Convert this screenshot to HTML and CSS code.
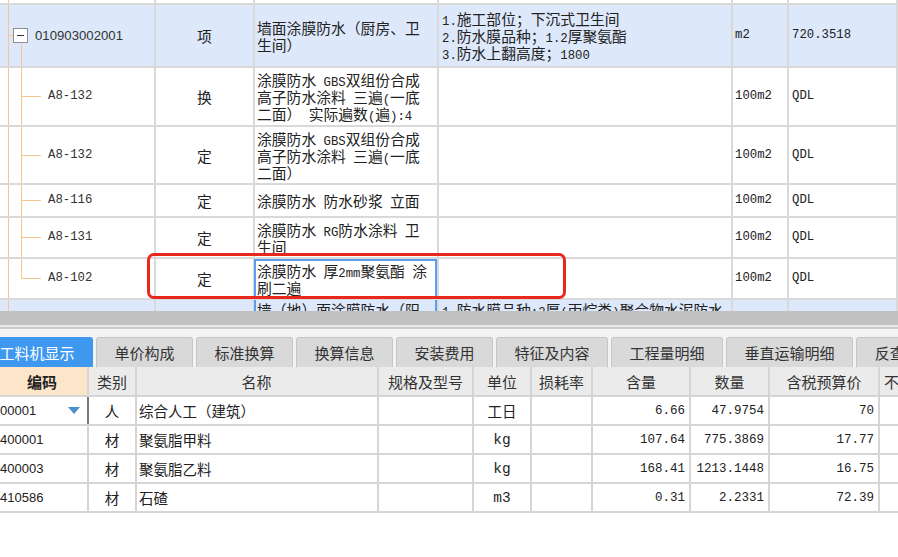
FILE: index.html
```html
<!DOCTYPE html>
<html lang="zh-CN">
<head>
<meta charset="utf-8">
<title>清单定额</title>
<link rel="stylesheet" href="styles.css">
</head>
<body>
<div class="app">
  <div class="upper">
    <div class="tr h0">
      <div class="td c1 t-blank"></div><div class="td c2"></div><div class="td c3"></div><div class="td c4"></div><div class="td c5"></div><div class="td c6"></div>
    </div>
    <div class="tr h1 hl">
      <div class="td c1 t-root"><span class="minus"></span><span class="code-root">010903002001</span></div>
      <div class="td c2 ctr">项</div>
      <div class="td c3"><div>墙面涂膜防水（厨房、卫<br>生间）</div></div>
      <div class="td c4"><div><span class="lt">1.</span>施工部位；下沉式卫生间<br><span class="lt">2.</span>防水膜品种；<span class="lt">1.2</span>厚聚氨酯<br><span class="lt">3.</span>防水上翻高度；<span class="lt">1800</span></div></div>
      <div class="td c5 mono">m2</div>
      <div class="td c6 mono">720.3518</div>
    </div>
    <div class="tr h2">
      <div class="td c1 t-child"><span class="code">A8-132</span></div>
      <div class="td c2 ctr">换</div>
      <div class="td c3"><div>涂膜防水<span class="lt"> GBS</span>双组份合成<br>高子防水涂料 三遍<span class="lt">(</span>一底<br>二面） 实际遍数<span class="lt">(</span>遍<span class="lt">):4</span></div></div>
      <div class="td c4"></div>
      <div class="td c5 mono">100m2</div>
      <div class="td c6 mono">QDL</div>
    </div>
    <div class="tr h3">
      <div class="td c1 t-child"><span class="code">A8-132</span></div>
      <div class="td c2 ctr">定</div>
      <div class="td c3"><div>涂膜防水<span class="lt"> GBS</span>双组份合成<br>高子防水涂料 三遍<span class="lt">(</span>一底<br>二面）</div></div>
      <div class="td c4"></div>
      <div class="td c5 mono">100m2</div>
      <div class="td c6 mono">QDL</div>
    </div>
    <div class="tr h4">
      <div class="td c1 t-child"><span class="code">A8-116</span></div>
      <div class="td c2 ctr">定</div>
      <div class="td c3"><div>涂膜防水 防水砂浆 立面</div></div>
      <div class="td c4"></div>
      <div class="td c5 mono">100m2</div>
      <div class="td c6 mono">QDL</div>
    </div>
    <div class="tr h5">
      <div class="td c1 t-child"><span class="code">A8-131</span></div>
      <div class="td c2 ctr">定</div>
      <div class="td c3"><div>涂膜防水<span class="lt"> RG</span>防水涂料 卫<br>生间</div></div>
      <div class="td c4"></div>
      <div class="td c5 mono">100m2</div>
      <div class="td c6 mono">QDL</div>
    </div>
    <div class="tr h5">
      <div class="td c1 t-last"><span class="code">A8-102</span></div>
      <div class="td c2 ctr">定</div>
      <div class="td c3 sel"><div>涂膜防水 厚<span class="lt">2mm</span>聚氨酯 涂<br>刷二遍</div></div>
      <div class="td c4"></div>
      <div class="td c5 mono">100m2</div>
      <div class="td c6 mono">QDL</div>
    </div>
    <div class="tr h5 hl top">
      <div class="td c1 t-blank"></div>
      <div class="td c2"></div>
      <div class="td c3 selcol"><div>墙（地）面涂膜防水（阳</div></div>
      <div class="td c4"><div><span class="lt">1.</span>防水膜品种<span class="lt">:2</span>厚<span class="lt">(</span>丙烷类<span class="lt">)</span>聚合物水泥防水</div></div>
      <div class="td c5"></div>
      <div class="td c6"></div>
    </div>
  </div>

  <div class="splitter"></div>

  <div class="tabbar">
    <div class="tabs">
      <div class="tab on">工料机显示</div>
      <div class="tab">单价构成</div>
      <div class="tab">标准换算</div>
      <div class="tab">换算信息</div>
      <div class="tab">安装费用</div>
      <div class="tab">特征及内容</div>
      <div class="tab">工程量明细</div>
      <div class="tab">垂直运输明细</div>
      <div class="tab">反查图形工程量</div>
    </div>
  </div>

  <div class="bgrid">
    <div class="br bh">
      <div class="bc b1 ctr peach">编码</div>
      <div class="bc b2 ctr">类别</div>
      <div class="bc b3 ctr">名称</div>
      <div class="bc b4 ctr">规格及型号</div>
      <div class="bc b5 ctr">单位</div>
      <div class="bc b6 ctr">损耗率</div>
      <div class="bc b7 ctr">含量</div>
      <div class="bc b8 ctr">数量</div>
      <div class="bc b9 ctr">含税预算价</div>
      <div class="bc b10">不含税预算价</div>
    </div>
    <div class="br">
      <div class="bc b1 dd"><span class="bcode">00001</span><span class="tri"></span></div>
      <div class="bc b2 ctr">人</div>
      <div class="bc b3">综合人工（建筑）</div>
      <div class="bc b4"></div>
      <div class="bc b5 ctr">工日</div>
      <div class="bc b6"></div>
      <div class="bc b7 num">6.66</div>
      <div class="bc b8 num">47.9754</div>
      <div class="bc b9 num">70</div>
      <div class="bc b10"></div>
    </div>
    <div class="br">
      <div class="bc b1"><span class="bcode">400001</span></div>
      <div class="bc b2 ctr">材</div>
      <div class="bc b3">聚氨脂甲料</div>
      <div class="bc b4"></div>
      <div class="bc b5 ctr mono">kg</div>
      <div class="bc b6"></div>
      <div class="bc b7 num">107.64</div>
      <div class="bc b8 num">775.3869</div>
      <div class="bc b9 num">17.77</div>
      <div class="bc b10"></div>
    </div>
    <div class="br">
      <div class="bc b1"><span class="bcode">400003</span></div>
      <div class="bc b2 ctr">材</div>
      <div class="bc b3">聚氨脂乙料</div>
      <div class="bc b4"></div>
      <div class="bc b5 ctr mono">kg</div>
      <div class="bc b6"></div>
      <div class="bc b7 num">168.41</div>
      <div class="bc b8 num">1213.1448</div>
      <div class="bc b9 num">16.75</div>
      <div class="bc b10"></div>
    </div>
    <div class="br">
      <div class="bc b1"><span class="bcode">410586</span></div>
      <div class="bc b2 ctr">材</div>
      <div class="bc b3">石碴</div>
      <div class="bc b4"></div>
      <div class="bc b5 ctr mono">m3</div>
      <div class="bc b6"></div>
      <div class="bc b7 num">0.31</div>
      <div class="bc b8 num">2.2331</div>
      <div class="bc b9 num">72.39</div>
      <div class="bc b10"></div>
    </div>
  </div>

  <div class="mark"></div>
</div>
</body>
</html>
```

FILE: styles.css
```css
html, body {
  margin: 0;
  padding: 0;
  background: #ffffff;
}

body {
  font-family: "Noto Sans CJK SC", "Noto Sans", sans-serif;
  color: #222222;
}

.app {
  position: relative;
  width: 898px;
  height: 557px;
  overflow: hidden;
  background: #ffffff;
}

/* ---------- upper grid ---------- */
.upper {
  height: 311px;
  overflow: hidden;
}

.tr {
  display: flex;
  box-sizing: border-box;
  border-bottom: 2px solid #d9d9d9;
  background: #ffffff;
}

.tr.hl {
  background: #dde8fa;
}

.h0 { height: 5px; }
.h1 { height: 63px; }
.h2 { height: 59px; }
.h3 { height: 58px; }
.h4 { height: 33px; }
.h5 { height: 41px; }

.td {
  flex: none;
  box-sizing: border-box;
  border-right: 2px solid #d9d9d9;
  display: flex;
  align-items: center;
  padding: 0 2px;
  font-size: 14.8px;
  line-height: 17px;
  white-space: nowrap;
  word-spacing: 4px;
  overflow: hidden;
}

.tr.top .td {
  align-items: flex-start;
  padding-top: 1px;
}

.c1 { width: 156px; padding: 0; }
.c2 { width: 99px; }
.c3 { width: 184px; padding-left: 2px; }
.c4 { width: 294px; padding-left: 3px; }
.c5 { width: 56px; padding-left: 2px; }
.c6 { width: 109px; padding-left: 3px; }

.ctr { justify-content: center; }

.lt {
  font-family: "Liberation Mono", monospace;
  font-size: 12.3px;
  line-height: 0;
  word-spacing: 0;
}

.mono {
  font-family: "Liberation Mono", monospace;
  font-size: 12.3px;
  color: #222222;
}

.code {
  font-family: "Liberation Mono", monospace;
  font-size: 12.3px;
  color: #333333;
  margin-left: 48px;
}

.code-root {
  font-family: "Liberation Sans", sans-serif;
  font-size: 13.2px;
  color: #333333;
}

.minus {
  position: relative;
  display: inline-block;
  box-sizing: border-box;
  width: 15px;
  height: 15px;
  margin: 0 7px 0 13px;
  border: 1px solid #8e8e8e;
  background: #ffffff;
}

.minus::after {
  content: "";
  position: absolute;
  left: 3px;
  top: 6px;
  width: 7px;
  height: 1px;
  background: #333333;
}

/* tree guide lines */
.t-blank {
  background: linear-gradient(#f7c68e, #f7c68e) 8px 0 / 1px 100% no-repeat;
}

.t-root {
  background:
    linear-gradient(#f7c68e, #f7c68e) 8px 0 / 1px 100% no-repeat,
    linear-gradient(#f7c68e, #f7c68e) 8px 50% / 5px 1px no-repeat,
    linear-gradient(#f7c68e, #f7c68e) 21px 100% / 1px calc(50% - 8px) no-repeat;
}

.t-child {
  background:
    linear-gradient(#f7c68e, #f7c68e) 8px 0 / 1px 100% no-repeat,
    linear-gradient(#f7c68e, #f7c68e) 21px 0 / 1px 100% no-repeat,
    linear-gradient(#f7c68e, #f7c68e) 21px 50% / 20px 1px no-repeat;
}

.t-last {
  background:
    linear-gradient(#f7c68e, #f7c68e) 8px 0 / 1px 100% no-repeat,
    linear-gradient(#f7c68e, #f7c68e) 21px 0 / 1px 50% no-repeat,
    linear-gradient(#f7c68e, #f7c68e) 21px 50% / 20px 1px no-repeat;
}

.sel {
  box-shadow: inset 0 0 0 2px #5c9ded;
  margin-left: -1px;
  width: 185px;
  padding-left: 3px;
}

.selcol {
  box-shadow: inset 2px 0 0 #5c9ded, inset -2px 0 0 #5c9ded;
  margin-left: -1px;
  width: 185px;
  padding-left: 3px;
}

/* ---------- splitter ---------- */
.splitter {
  height: 18px;
  background: linear-gradient(#c1c1c1 0, #c1c1c1 14px, #e8e8e8 14px, #e8e8e8 16px, #cdcdcd 16px, #cdcdcd 18px);
}

/* ---------- tabs ---------- */
.tabbar {
  background: #f3f3f3;
  padding-top: 8px;
}

.tabs {
  display: flex;
  gap: 3px;
  height: 30px;
  margin-left: -19px;
}

.tab {
  flex: none;
  box-sizing: border-box;
  height: 30px;
  padding: 0 17.5px;
  border: 1px solid #c6c6c6;
  border-bottom: none;
  border-radius: 3px 3px 0 0;
  background: #d9d9d9;
  color: #333333;
  font-size: 15px;
  display: flex;
  align-items: center;
  white-space: nowrap;
}

.tab.on {
  background: #3f98ef;
  border-color: #3f98ef;
  color: #ffffff;
}

/* ---------- lower grid ---------- */
.br {
  display: flex;
  box-sizing: border-box;
  height: 29px;
  border-bottom: 2px solid #d5d5d5;
  background: #ffffff;
}

.br.bh {
  height: 30px;
  background: #ebebeb;
}

.bc {
  flex: none;
  box-sizing: border-box;
  border-right: 2px solid #d5d5d5;
  display: flex;
  align-items: center;
  padding: 0 3px;
  font-size: 14.5px;
  color: #222222;
  white-space: nowrap;
  overflow: hidden;
}

.bh .bc {
  font-size: 15px;
  color: #333333;
}

.b1 { width: 89px; padding-left: 0; }
.b2 { width: 48px; }
.b3 { width: 242px; padding-left: 2px; }
.b4 { width: 95px; }
.b5 { width: 58px; }
.b6 { width: 61px; }
.b7 { width: 98px; }
.b8 { width: 79px; }
.b9 { width: 110px; }
.b10 { width: 40px; padding-left: 4px; }

.bh .peach {
  background: #fde5c9;
  font-weight: bold;
  color: #222222;
}

.bcode {
  font-family: "Liberation Sans", sans-serif;
  font-size: 13px;
  color: #222222;
}

.dd {
  border-right-color: #7a7a7a;
}

.tri {
  margin-left: auto;
  margin-right: 4px;
  width: 0;
  height: 0;
  border-left: 6px solid transparent;
  border-right: 6px solid transparent;
  border-top: 7px solid #4d8fcf;
}

.num {
  justify-content: flex-end;
  padding-right: 4px;
  font-family: "Liberation Mono", monospace;
  font-size: 12.5px;
}

/* ---------- red annotation ---------- */
.mark {
  position: absolute;
  left: 147px;
  top: 253px;
  width: 419px;
  height: 46px;
  box-sizing: border-box;
  border: 3px solid #e8271d;
  border-radius: 7px;
}
```
